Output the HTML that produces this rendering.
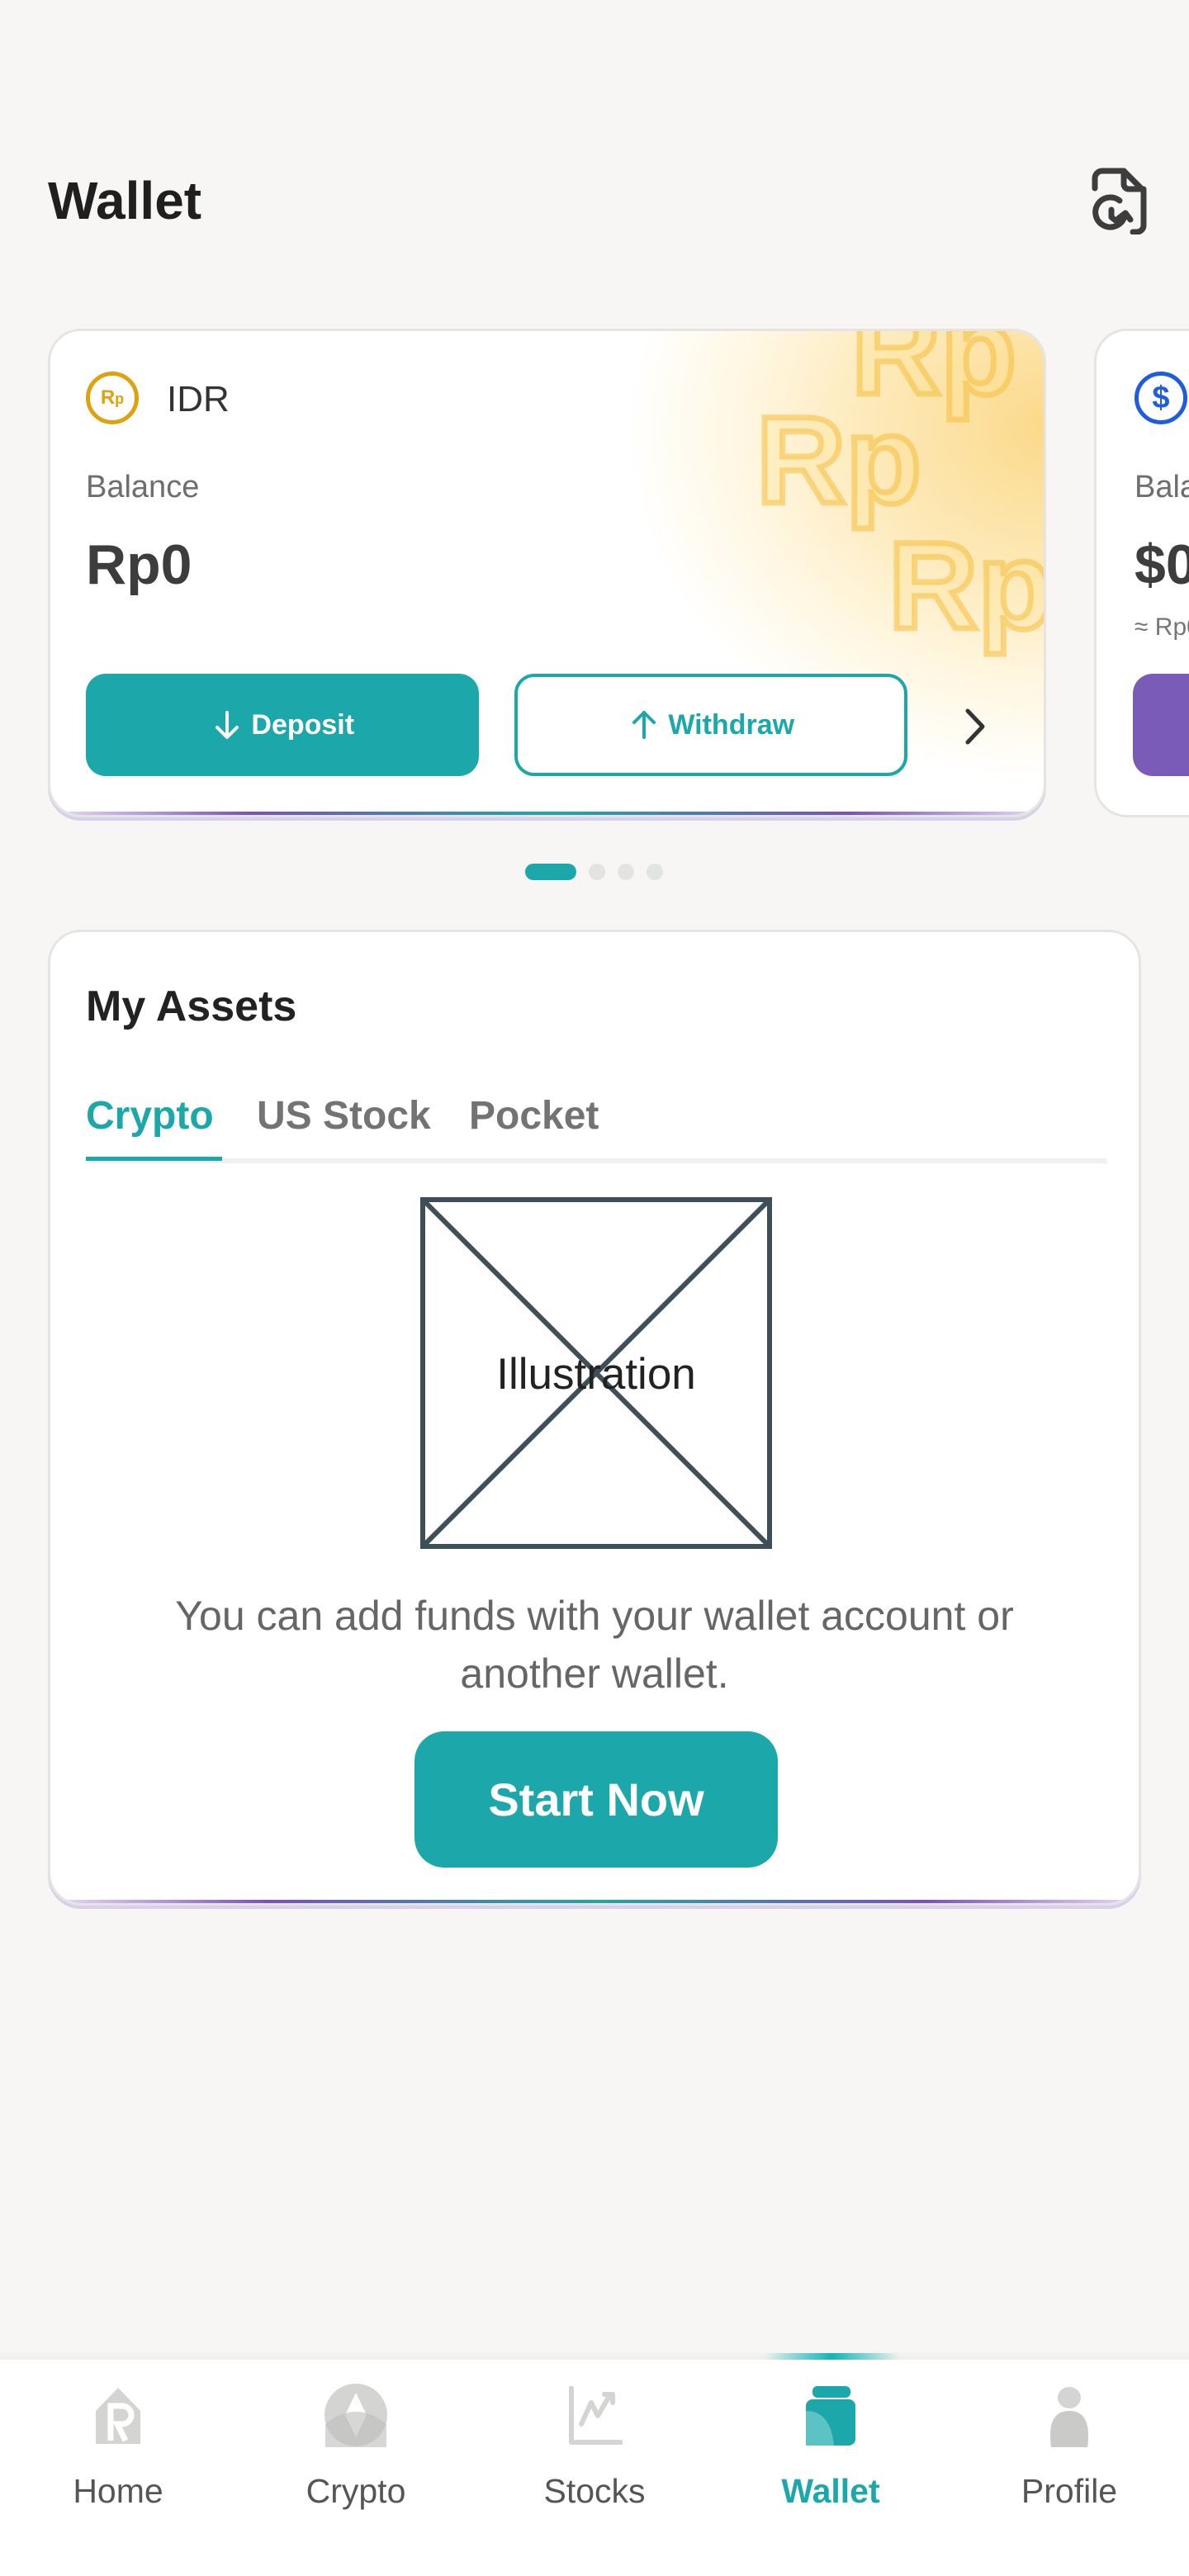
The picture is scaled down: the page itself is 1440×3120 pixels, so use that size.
<!DOCTYPE html>
<html><head><meta charset="utf-8"><style>
*{margin:0;padding:0;box-sizing:border-box}
body{width:1440px;height:3120px;background:#f7f6f4;font-family:"Liberation Sans",sans-serif;position:relative;overflow:hidden;color:#222}
.abs{position:absolute}
.card{position:absolute;background:#fff;border:3px solid #e6e4e2;border-radius:40px;overflow:hidden}
.btn{position:absolute;border-radius:24px;display:flex;align-items:center;justify-content:center;font-size:34px;font-weight:bold}
.nav{position:absolute;top:2858px;left:0;width:1440px;height:262px;background:#fff}
.ni{position:absolute;width:200px;text-align:center;top:136px;font-size:41px;color:#555}
.rp{position:absolute;font-size:150px;font-weight:bold;color:rgba(253,225,150,0.35);-webkit-text-stroke:7px rgba(245,190,60,0.55)}
</style></head><body>
<div class="abs" style="left:58px;top:206px;font-size:64px;font-weight:bold;color:#1f1f1f">Wallet</div>
<svg class="abs" style="left:1318px;top:202px" width="74" height="82" viewBox="0 0 74 82" fill="none" stroke="#3d3d3d" stroke-width="7" stroke-linecap="round" stroke-linejoin="round">
<path d="M8 26V14a9 9 0 0 1 9-9h26l24 24v42a8 8 0 0 1-8 8h-5"/><path d="M43 5v16a6 6 0 0 0 6 6h18"/>
<path d="M44 60a18 18 0 1 1-6-19"/><path d="M28 52v9l5 4"/><path d="M37 62l8-6 6 8"/></svg>

<div class="card" style="left:58px;top:398px;width:1209px;height:592px;box-shadow:0 4px 0 #d8d0ea">
 <div class="abs" style="left:600px;top:0;width:609px;height:592px;background:radial-gradient(ellipse 600px 500px at 100% 20%,#fbd98a 0%,#fde9b8 35%,#fff6df 60%,rgba(255,255,255,0) 85%)"></div>
 <div class="rp" style="left:970px;top:-62px">Rp</div>
 <div class="rp" style="left:855px;top:70px">Rp</div>
 <div class="rp" style="left:1015px;top:222px">Rp</div>
 <div class="abs" style="left:43px;top:49px;width:64px;height:64px;border:5px solid #dea20e;border-radius:50%;color:#dea20e;font-size:24px;font-weight:bold;text-align:center;line-height:54px">R<span style="font-size:18px">p</span></div>
 <div class="abs" style="left:141px;top:58px;font-size:44px;color:#333">IDR</div>
 <div class="abs" style="left:43px;top:168px;font-size:38px;color:#6e6e6e">Balance</div>
 <div class="abs" style="left:43px;top:244px;font-size:68px;color:#3d3d3d;font-weight:bold">Rp0</div>
 <div class="btn" style="left:43px;top:415px;width:476px;height:124px;background:#1ca8ab;color:#fff">
  <svg width="40" height="40" viewBox="0 0 40 40" fill="none" stroke="#fff" stroke-width="4" stroke-linecap="round" stroke-linejoin="round"><path d="M20 5v30M8 23l12 12 12-12"/></svg>&nbsp;Deposit</div>
 <div class="btn" style="left:562px;top:415px;width:476px;height:124px;border:4px solid #1ca8ab;color:#1ca8ab;background:#fff">
  <svg width="40" height="40" viewBox="0 0 40 40" fill="none" stroke="#1ca8ab" stroke-width="4" stroke-linecap="round" stroke-linejoin="round"><path d="M20 35V5M8 17L20 5l12 12"/></svg>&nbsp;Withdraw</div>
 <svg class="abs" style="left:1105px;top:456px" width="30" height="46" viewBox="0 0 30 46" fill="none" stroke="#333" stroke-width="5" stroke-linecap="round" stroke-linejoin="round"><path d="M6 4l18 19L6 42"/></svg>
 <div class="abs" style="left:0;bottom:0;width:1209px;height:4px;background:linear-gradient(90deg,#e8def7,#7b4fc0 20%,#1ca8ab 50%,#7b4fc0 80%,#e8def7)"></div>
</div>

<div class="card" style="left:1325px;top:398px;width:300px;height:592px">
 <div class="abs" style="left:46px;top:49px;width:64px;height:64px;border:5px solid #1f5ce0;border-radius:50%;color:#1f5ce0;font-size:38px;font-weight:bold;text-align:center;line-height:54px">$</div>
 <div class="abs" style="left:46px;top:168px;font-size:38px;color:#6e6e6e">Balance</div>
 <div class="abs" style="left:46px;top:244px;font-size:68px;color:#3d3d3d;font-weight:bold">$0</div>
 <div class="abs" style="left:46px;top:342px;font-size:30px;color:#777">≈ Rp0</div>
 <div class="abs" style="left:44px;top:415px;width:300px;height:124px;background:#7a5cb8;border-radius:24px"></div>
</div>

<div class="abs" style="left:636px;top:1046px;width:62px;height:20px;border-radius:10px;background:#1ca8ab"></div>
<div class="abs" style="left:713px;top:1046px;width:20px;height:20px;border-radius:50%;background:#e3e3e3"></div>
<div class="abs" style="left:748px;top:1046px;width:20px;height:20px;border-radius:50%;background:#e3e3e3"></div>
<div class="abs" style="left:783px;top:1046px;width:20px;height:20px;border-radius:50%;background:#e3e3e3"></div>

<div class="card" style="left:58px;top:1126px;width:1324px;height:1182px;box-shadow:0 4px 0 #d8d0ea">
 <div class="abs" style="left:43px;top:60px;font-size:52px;font-weight:bold;color:#222">My Assets</div>
 <div class="abs" style="left:43px;top:195px;font-size:48px;font-weight:bold;color:#1ca8ab">Crypto</div>
 <div class="abs" style="left:250px;top:195px;font-size:48px;font-weight:bold;color:#737373">US Stock</div>
 <div class="abs" style="left:507px;top:195px;font-size:48px;font-weight:bold;color:#737373">Pocket</div>
 <div class="abs" style="left:43px;top:274px;width:1237px;height:6px;background:#f0f0f0"></div>
 <div class="abs" style="left:43px;top:272px;width:165px;height:5px;background:#1ca8ab"></div>
 <svg class="abs" style="left:448px;top:321px" width="426" height="426" viewBox="0 0 426 426" fill="none" stroke="#3e4f59" stroke-width="6"><rect x="3" y="3" width="420" height="420"/><path d="M3 3L423 423M423 3L3 423"/></svg>
 <div class="abs" style="left:448px;top:505px;width:426px;text-align:center;font-size:53px;color:#222">Illustration</div>
 <div class="abs" style="left:0;top:793px;width:1318px;text-align:center;font-size:50px;line-height:70px;color:#666">You can add funds with your wallet account or<br>another wallet.</div>
 <div class="abs" style="left:441px;top:968px;width:440px;height:165px;border-radius:36px;background:#1ca8ab;color:#fff;font-size:56px;font-weight:bold;display:flex;align-items:center;justify-content:center">Start Now</div>
 <div class="abs" style="left:0;bottom:0;width:1324px;height:4px;background:linear-gradient(90deg,#e8def7,#7b4fc0 20%,#1ca8ab 50%,#7b4fc0 80%,#e8def7)"></div>
</div>

<div class="abs" style="left:0;top:2846px;width:1440px;height:12px;background:linear-gradient(#f7f6f4,#efeeec)"></div>
<div class="abs" style="left:925px;top:2850px;width:165px;height:8px;background:linear-gradient(90deg,rgba(28,168,171,0),#10b5b8 50%,rgba(28,168,171,0))"></div>
<div class="nav">
 <svg class="abs" style="left:110px;top:32px" width="66" height="74" viewBox="0 0 66 74"><path d="M33 2L6 30v40h54V30z" fill="#d4d4d2"/><path d="M24 66V24h14a11 11 0 0 1 0 22h-6l10 20" fill="none" stroke="#fff" stroke-width="7"/></svg>
 <svg class="abs" style="left:392px;top:28px" width="78" height="78" viewBox="0 0 78 78"><circle cx="39" cy="39" r="38" fill="#d4d4d2"/><path d="M39 12l13 27-13 27-13-27z" fill="#fff"/><path d="M2 50q37-30 74 0v28H2z" fill="#bdbdbb" opacity=".6"/></svg>
 <svg class="abs" style="left:688px;top:32px" width="66" height="72" viewBox="0 0 66 72" fill="none" stroke="#d4d4d2" stroke-width="6" stroke-linecap="round" stroke-linejoin="round"><path d="M4 2v66h60"/><path d="M16 46l12-26 8 16 14-24"/><path d="M44 10h10v10"/></svg>
 <svg class="abs" style="left:976px;top:32px" width="60" height="72" viewBox="0 0 60 72"><rect x="8" y="0" width="46" height="14" rx="6" fill="#1ca8ab"/><rect x="0" y="16" width="60" height="56" rx="8" fill="#1ca8ab"/><path d="M0 30q30 0 34 42H0z" fill="#5cc2c4"/></svg>
 <svg class="abs" style="left:1265px;top:32px" width="60" height="74" viewBox="0 0 60 74"><ellipse cx="30" cy="14" rx="14" ry="13" fill="#d4d4d2"/><path d="M8 74q-6-44 22-44t22 44z" fill="#cacac8"/></svg>
 <div class="ni" style="left:43px">Home</div>
 <div class="ni" style="left:331px">Crypto</div>
 <div class="ni" style="left:620px">Stocks</div>
 <div class="ni" style="left:906px;color:#1ca8ab;font-weight:bold">Wallet</div>
 <div class="ni" style="left:1195px">Profile</div>
</div>
</body></html>
